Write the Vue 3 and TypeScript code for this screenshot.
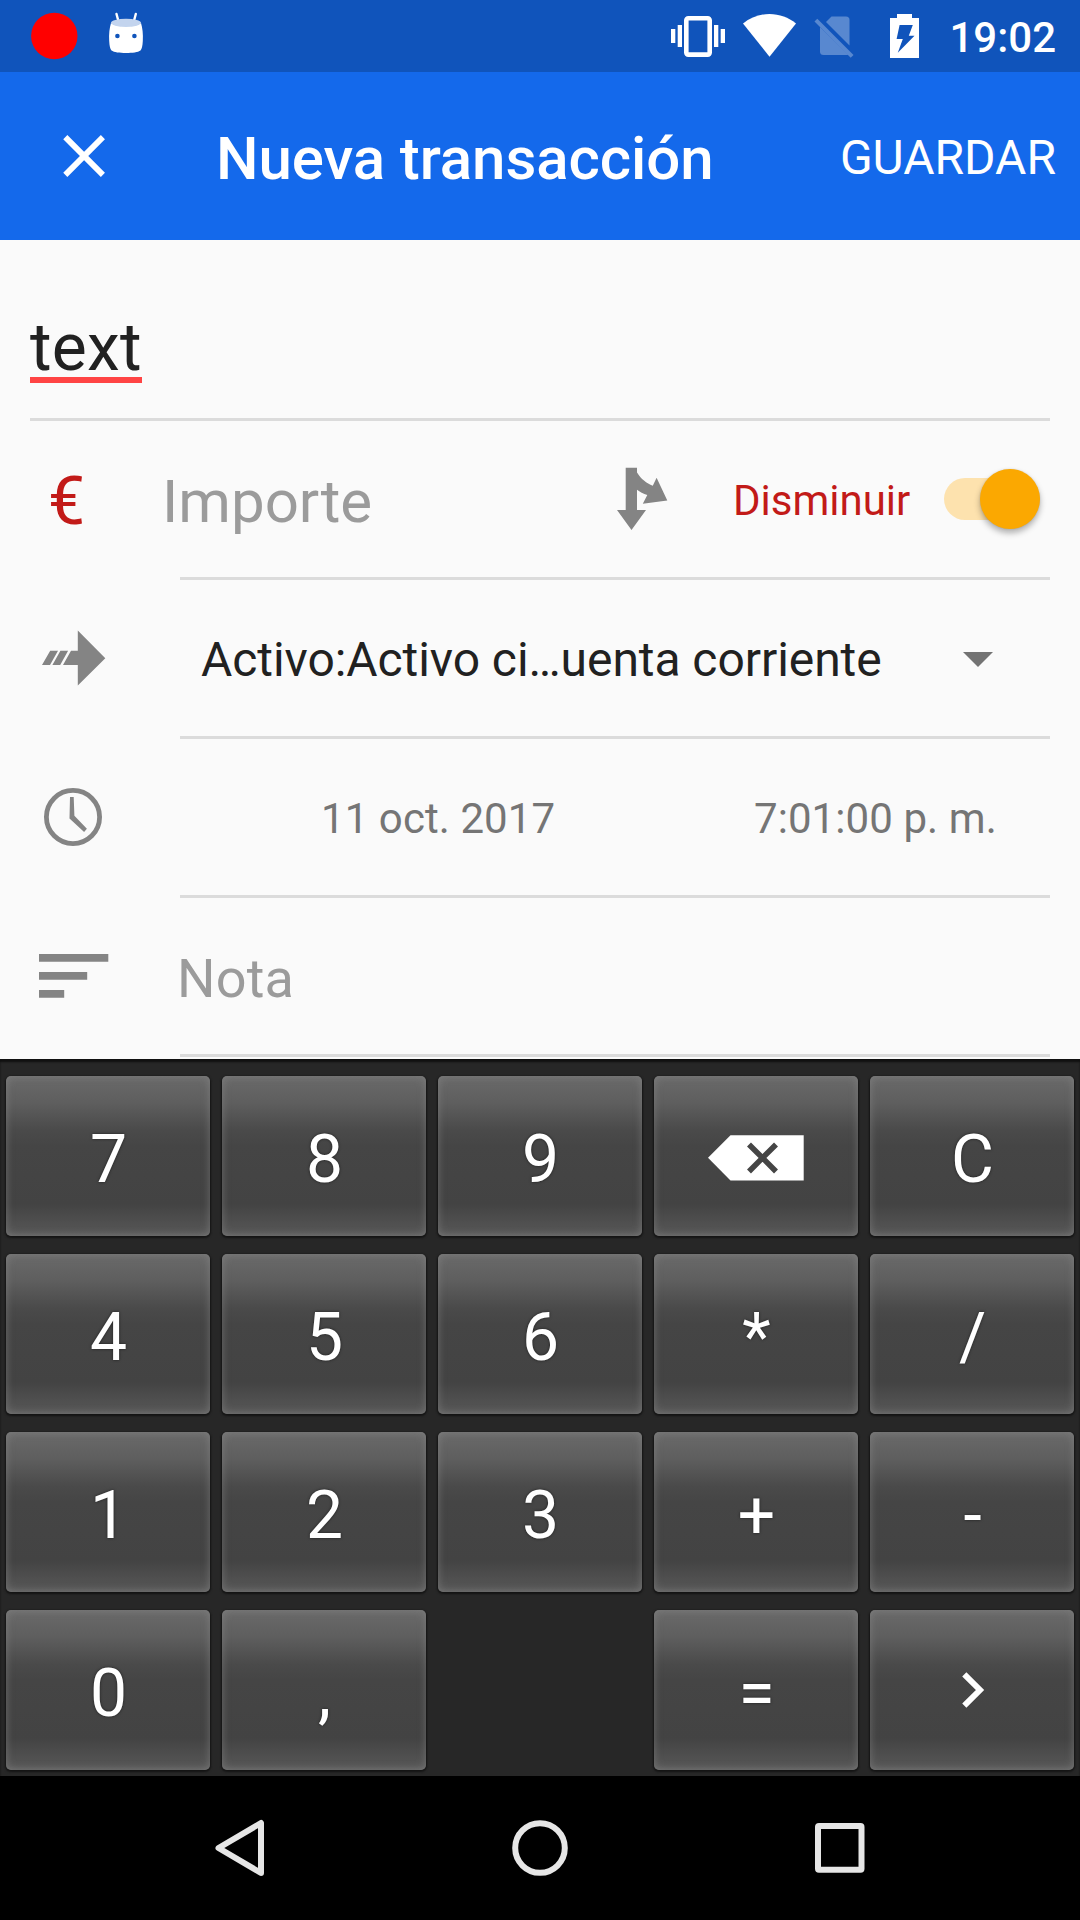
<script setup lang="ts">
interface Key {
  id: string
  label?: string
  icon?: 'backspace' | 'chevron'
  empty?: boolean
}

const keys: Key[] = [
  { id: '7', label: '7' },
  { id: '8', label: '8' },
  { id: '9', label: '9' },
  { id: 'back', icon: 'backspace' },
  { id: 'c', label: 'C' },
  { id: '4', label: '4' },
  { id: '5', label: '5' },
  { id: '6', label: '6' },
  { id: 'mul', label: '*' },
  { id: 'div', label: '/' },
  { id: '1', label: '1' },
  { id: '2', label: '2' },
  { id: '3', label: '3' },
  { id: 'plus', label: '+' },
  { id: 'minus', label: '-' },
  { id: '0', label: '0' },
  { id: 'comma', label: ',' },
  { id: 'none', empty: true },
  { id: 'eq', label: '=' },
  { id: 'next', icon: 'chevron' },
]
</script>

<template>
  <div class="screen">
    <header class="status">
      <svg class="status-left" width="160" height="72" viewBox="0 0 160 72">
        <circle cx="54.3" cy="36" r="23.2" fill="#f00" />
        <path d="M116.5 14l2 7.5M135.8 14l-2 7.5" stroke="#fff" stroke-width="2.4" stroke-linecap="round" />
        <path d="M111 23c3 2.200 8 3.300 15 3.300s12-1.100 15-3.300c1.500 5 2.200 11 1.800 18-.3 5-.9 8-2.300 9.500-2.500 1.800-8 2.500-14.500 2.500s-12-.7-14.500-2.500c-1.400-1.500-2-4.500-2.300-9.500-.4-7 .3-13 1.800-18z" fill="#fff" />
        <ellipse cx="126" cy="22.800" rx="15" ry="4" fill="#c3d4ee" />
        <circle cx="117.400" cy="36" r="2.300" fill="#1054bb" />
        <circle cx="134.400" cy="36" r="2.300" fill="#1054bb" />
      </svg>
      <svg class="status-right" width="270" height="72" viewBox="664 0 270 72">
        <rect x="686.300" y="18.200" width="23.400" height="36.400" rx="2" fill="none" stroke="#fff" stroke-width="4.600" />
        <path d="M677.700 25h4.300v22h-4.300zM671 29h4.300v14H671zM714 25h4.300v22H714zM720.700 29h4.300v14h-4.300z" fill="#fff" />
        <path d="M743 23.500C750.500 17.500 759.500 14 769.500 14s19 3.500 26.500 9.500L769.500 56.700z" fill="#fff" />
        <g fill="#5888d0">
          <path d="M831.500 16.500H846q3.500 0 3.500 3.500v25.500L826 22z" />
          <path d="M820 27v24.500q0 3.500 3.500 3.500H846c1 0 1.700-.2 2.200-.6z" />
          <path d="M814.500 21.500l2.800-2.800 36.200 36.200-2.800 2.800z" />
        </g>
        <path d="M897 14h15v4h7v40h-29V18h7zM899.600 25l-3 14h6.200l-5 13.700 16.700-16.900h-5.700l4-10.800z" fill="#fff" />
      </svg>
      <span class="clock">19:02</span>
    </header>

    <div class="appbar">
      <svg class="close" width="48" height="48" viewBox="0 0 48 48">
        <path d="M5.300 5.100l37.600 37.800M42.900 5.100L5.300 42.900" stroke="#fff" stroke-width="5.800" />
      </svg>
      <h1>Nueva transacción</h1>
      <span class="save">GUARDAR</span>
    </div>

    <main class="form">
      <div class="field description"><span class="typed">text</span></div>

      <div class="row">
        <div class="lead"><span class="euro">€</span></div>
        <div class="cell amount">
          <span class="importe">Importe</span>
          <svg class="split" width="56" height="68" viewBox="614 464 56 68">
            <path d="M625.700 467.700H637v4.800c4 6.500 9.500 10.700 15.800 13.300l3.800-8L667.300 500.500l-24.500 3.200 4.500-8.600c-4-1.300-7.500-3-10.300-5.300V510h9l-14.500 20L617 510h8.700z" fill="#848484" />
          </svg>
          <span class="type">Disminuir</span>
          <div class="switch"><div class="thumb"></div></div>
        </div>
      </div>

      <div class="row">
        <div class="lead">
          <svg class="i-transfer" width="66" height="58" viewBox="41 629 66 58">
            <path d="M77.800 630.600L105.300 658.300 77.800 685.500V665H63l8-14.300h6.800zM50.200 650.700H58L50 665h-8zM60.400 650.700h7.700L60.200 665h-7.800z" fill="#848484" />
          </svg>
        </div>
        <div class="cell account">
          <span>Activo:Activo ci…uenta corriente</span>
          <svg class="caret" width="30" height="15" viewBox="0 0 30 15"><path d="M0 0h30L15 15z" fill="#737373" /></svg>
        </div>
      </div>

      <div class="row">
        <div class="lead">
          <svg class="i-clock" width="60" height="60" viewBox="43.500 787 60 60">
            <circle cx="73.500" cy="817" r="26.600" fill="none" stroke="#848484" stroke-width="4.800" />
            <path d="M70.500 797h3.700l.7 18.700 12.500 13-2.800 3.300L70 818.500z" fill="#848484" />
          </svg>
        </div>
        <div class="cell when">
          <span class="date">11 oct. 2017</span>
          <span class="time">7:01:00 p. m.</span>
        </div>
      </div>

      <div class="row">
        <div class="lead">
          <svg class="i-note" width="70" height="44" viewBox="0 0 70 44">
            <path d="M0 0h69.300v7.800H0zM0 18h48.200v7.800H0zM0 36h25.200v7.800H0z" fill="#848484" />
          </svg>
        </div>
        <div class="cell note"><span>Nota</span></div>
      </div>
    </main>

    <section class="keyboard">
      <div v-for="k in keys" :key="k.id" :class="k.empty ? 'gap' : 'key'">
        <span v-if="k.label">{{ k.label }}</span>
        <svg v-else-if="k.icon === 'backspace'" class="backspace" width="96" height="46" viewBox="0 0 96 46">
          <path d="M0 22.800L22.500.300H95.700v45.200H22.500z" fill="#fff" />
          <path d="M41 9.400l27 27M68 9.400l-27 27" stroke="#454545" stroke-width="5.600" />
        </svg>
        <svg v-else-if="k.icon === 'chevron'" class="chevron" width="24" height="36" viewBox="0 0 24 36">
          <path d="M2.300 2.400L18 18 2.300 33.600" fill="none" stroke="#fff" stroke-width="5.900" />
        </svg>
      </div>
    </section>

    <nav class="navbar">
      <svg width="54" height="60" viewBox="0 0 54 60">
        <path d="M48 5v50L5.500 30z" fill="none" stroke="#e6e6e6" stroke-width="6" stroke-linejoin="round" />
      </svg>
      <svg width="60" height="60" viewBox="0 0 60 60">
        <circle cx="30" cy="30" r="24.800" fill="none" stroke="#e6e6e6" stroke-width="6" />
      </svg>
      <svg width="54" height="60" viewBox="0 0 54 60">
        <rect x="5" y="8" width="43.500" height="43.700" rx="1" fill="none" stroke="#e6e6e6" stroke-width="6" stroke-linejoin="round" />
      </svg>
    </nav>
  </div>
</template>

<style>
body {
  margin: 0;
}
</style>

<style scoped>
.screen {
  width: 1080px;
  height: 1920px;
  display: flex;
  flex-direction: column;
  overflow: hidden;
  background: #fafafa;
  font-family: Roboto, "Noto Sans", sans-serif;
  color: #212121;
  white-space: nowrap;
}
svg {
  display: block;
  flex: none;
}
.status {
  height: 72px;
  background: #1054bb;
  color: #fff;
  display: flex;
  flex: none;
}
.status-right {
  margin-left: 504px;
}
.clock {
  margin-left: auto;
  margin-right: 24px;
  font-size: 42px;
  font-weight: 500;
  line-height: 76px;
}
.appbar {
  height: 168px;
  flex: none;
  background: #1469eb;
  color: #fff;
  display: flex;
}
.close {
  margin: 60px 0 0 60px;
}
h1 {
  margin: 0 0 0 108px;
  font-size: 60px;
  font-weight: 500;
  letter-spacing: -0.07px;
  line-height: 173px;
}
.save {
  margin-left: auto;
  margin-right: 24px;
  font-size: 48px;
  line-height: 171px;
}
.form {
  height: 819px;
  flex: none;
  overflow: hidden;
}
.field {
  height: 178px;
  margin: 0 30px;
  border-bottom: 3px solid #dbdbdb;
}
.typed {
  display: inline-block;
  margin-top: 69px;
  height: 68px;
  font-size: 66px;
  letter-spacing: 0.25px;
  line-height: 78px;
  border-bottom: 6px solid #ff4444;
}
.row {
  height: 159px;
  display: flex;
}
.lead {
  width: 180px;
  flex: none;
}
.cell {
  width: 870px;
  height: 156px;
  border-bottom: 3px solid #dbdbdb;
  display: flex;
}
.euro {
  display: block;
  margin-left: 48px;
  font-size: 66px;
  line-height: 162px;
  color: #c21a18;
}
.importe {
  width: 452px;
  margin-left: -18px;
  font-size: 60px;
  line-height: 161px;
  color: #9b9b9b;
}
.split {
  margin-top: 43px;
}
.type {
  width: 211px;
  margin-left: 63px;
  font-size: 42px;
  line-height: 160px;
  color: #c21a18;
}
.switch {
  width: 96px;
  height: 42px;
  margin-top: 57px;
  border-radius: 21px;
  background: #fde2ae;
  display: flex;
  justify-content: flex-end;
  align-items: center;
}
.thumb {
  flex: none;
  width: 60px;
  height: 60px;
  border-radius: 50%;
  margin: -1px 0 0;
  background: #fba801;
  box-shadow: 0 4px 6px rgba(0, 0, 0, 0.3), 0 0 2px rgba(0, 0, 0, 0.12);
}
.i-transfer {
  margin: 49px 0 0 41px;
}
.account {
  font-size: 48px;
  letter-spacing: -0.06px;
}
.account span {
  width: 762px;
  margin-left: 21px;
  line-height: 159px;
}
.caret {
  margin-top: 72px;
}
.i-clock {
  margin: 48px 0 0 43px;
}
.when {
  font-size: 42px;
  letter-spacing: 0.08px;
  line-height: 160px;
  color: #757575;
}
.date {
  width: 433px;
  margin-left: 141px;
}
.i-note {
  margin: 56px 0 0 39px;
}
.note {
  font-size: 54px;
  line-height: 161px;
  color: #9b9b9b;
}
.note span {
  margin-left: -3px;
  letter-spacing: 0.2px;
}
.keyboard {
  height: 700px;
  flex: none;
  padding: 17px 6px 0;
  background: #272727;
  box-shadow: inset 0 3px 2px #101010;
  display: grid;
  grid-template-columns: repeat(5, 204px);
  grid-auto-rows: 160px;
  gap: 18px 12px;
}
.key {
  border-radius: 5px;
  background: linear-gradient(#6a6a6a 0%, #5e5e5e 17%, #4a4a4a 34%, #454545 44%, #434343 80%, #555 97%, #5c5c5c 100%);
  box-shadow: inset 0 0 9px rgba(150, 150, 150, 0.5), 0 1px 2px 1px #141414;
  color: #fff;
  font-size: 66px;
  line-height: 167px;
  text-align: center;
  text-indent: 1px;
  text-shadow: 0 0 3px rgba(0, 0, 0, 0.6);
}
.backspace {
  margin: 59px 0 0 54px;
}
.chevron {
  margin: 62px 0 0 92px;
}
.navbar {
  flex: 1;
  background: #000;
  display: flex;
  justify-content: space-between;
  padding: 42px 213px 0;
}
</style>
